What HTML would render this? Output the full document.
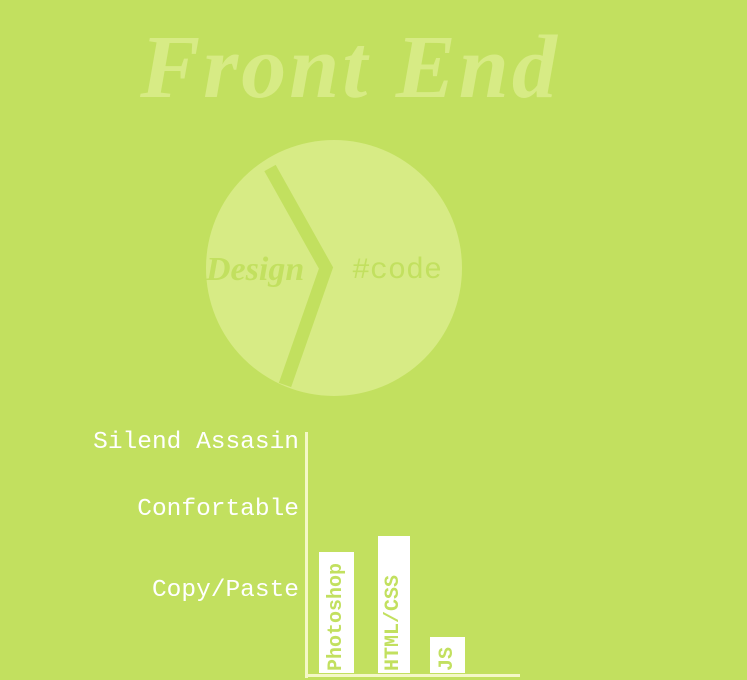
<!DOCTYPE html>
<html><head><style>
body{margin:0;width:747px;height:680px;background:#c2e05f;position:relative;overflow:hidden;font-family:"Liberation Mono",monospace}
.t{position:absolute;left:100px;top:18px;width:500px;text-align:center;font-family:"Liberation Serif",serif;font-style:italic;font-weight:bold;font-size:90px;color:#d7eb85;line-height:100px;letter-spacing:3px;white-space:nowrap}
.lab{position:absolute;right:448px;color:#fff;font-size:24.5px;white-space:nowrap;line-height:28px}
.bar{position:absolute;background:#fff;bottom:7px;display:flex;justify-content:center;align-items:flex-end;overflow:hidden}
.bar span{writing-mode:vertical-rl;transform:rotate(180deg);color:#c2e05f;font-size:20px;white-space:nowrap;font-weight:bold;padding-top:2px;line-height:22px}
</style></head><body>
<div class="t">Front End</div>
<svg width="747" height="680" style="position:absolute;left:0;top:0">
<circle cx="334" cy="268" r="128" fill="#d7eb85"/>
<polyline points="270,168 326,268 285,385" fill="none" stroke="#c2e05f" stroke-width="13"/>
<text x="206" y="280" font-family="Liberation Serif,serif" font-style="italic" font-weight="bold" font-size="34" fill="#c2e05f">Design</text>
<text x="352" y="278" font-family="Liberation Mono,monospace" font-size="30" fill="#c2e05f">#code</text>
<rect x="305" y="432" width="3" height="246" fill="#f4f8c8"/>
<rect x="305" y="674" width="215" height="3" fill="#f4f8c8"/>
</svg>
<div class="lab" style="top:429px">Silend Assasin</div>
<div class="lab" style="top:496px">Confortable</div>
<div class="lab" style="top:577px">Copy/Paste</div>
<div class="bar" style="left:319px;width:35px;height:121px"><span>Photoshop</span></div>
<div class="bar" style="left:378px;width:32px;height:137px"><span>HTML/CSS</span></div>
<div class="bar" style="left:430px;width:35px;height:36px"><span>JS</span></div>
</body></html>
